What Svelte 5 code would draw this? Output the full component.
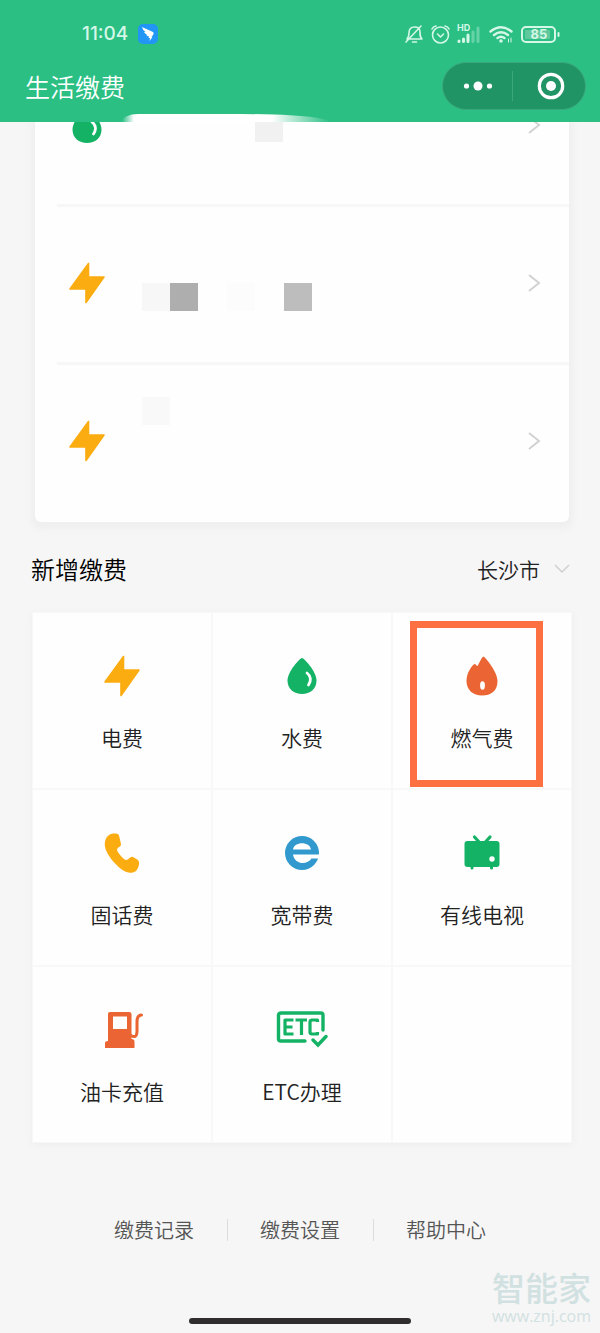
<script>
  let city = $state('长沙市');

  // pixelated blocks that cover each account's private details
  const accounts = [
    { icon: 'water', blocks: [{ x: 113, y: 34, fill: '#f1f1f1' }] },
    {
      icon: 'power',
      blocks: [
        { x: 0, y: 45, fill: '#f7f7f7' },
        { x: 28, y: 45, fill: '#aeaeae' },
        { x: 85, y: 45, fill: '#fcfcfc' },
        { x: 142, y: 45, fill: '#bdbdbd' }
      ]
    },
    { icon: 'power', blocks: [{ x: 0, y: 1, fill: '#f9f9f9' }] }
  ];

  const services = [
    { icon: 'power', label: '电费' },
    { icon: 'water', label: '水费' },
    { icon: 'gas', label: '燃气费', marked: true },
    { icon: 'phone', label: '固话费' },
    { icon: 'broadband', label: '宽带费' },
    { icon: 'tv', label: '有线电视' },
    { icon: 'fuel', label: '油卡充值' },
    { icon: 'etc', label: 'ETC办理' }
  ];

  const links = ['缴费记录', '缴费设置', '帮助中心'];
</script>

{#snippet serviceIcon(name)}
  <svg class="service-icon" viewBox="0 0 52 44" aria-hidden="true">
    {#if name === 'power'}
      <path d="M27.500 2.500V16H43L25 41.500V28H9Z" fill="#fbac10" stroke="#fbac10" stroke-width="1.600" stroke-linejoin="round" />
    {:else if name === 'water'}
      <path d="M26 4C28 4 40.500 17.500 40.500 26.500C40.500 35 34 40 26 40C18 40 11.500 35 11.500 26.500C11.500 17.500 24 4 26 4Z" fill="#14b264" />
      <path d="M31 19C35 22 35.500 27 32.500 31" fill="none" stroke="#fff" stroke-width="2.800" stroke-linecap="round" />
    {:else if name === 'gas'}
      <path d="M27.500 2.500C30 4 41.500 18 41.500 27C41.500 37 35 41.500 26 41.500C17 41.500 10.500 36 10.500 27C10.500 19 16 11 18.500 10C20 10 20.500 12 21.500 12C23 10 25.500 3 27.500 2.500Z" fill="#ea6533" />
      <ellipse cx="26.500" cy="31.500" rx="2.400" ry="4.200" fill="#fff" />
    {:else if name === 'phone'}
      <path d="M13 4C17 2 22 2 23 4.500L25 13C25.500 16 21 16 21 19C22 22 27 28 30 29C33 29 34 25 37 26L42 29C44 31 43 37 40 40C36 43 30 42 25 38C18 32 12 25 9.500 18C8 12 9 7 13 4Z" fill="#fbac10" />
    {:else if name === 'broadband'}
      <circle cx="26" cy="22" r="17" fill="#3199cd" />
      <path d="M17 18.500C18 10 34 10 35 18.500ZM17 23.500H43V27.500H35.500C31 34.500 18.500 33.500 17 23.500Z" fill="#fff" />
    {:else if name === 'tv'}
      <path d="M18.500 6L24 12M34 6L28.500 12" fill="none" stroke="#14b264" stroke-width="3.200" stroke-linecap="round" />
      <rect x="8.500" y="10" width="35" height="26" rx="3" fill="#14b264" />
      <path d="M16 35V37M35.500 35V37" stroke="#14b264" stroke-width="3" stroke-linecap="round" />
      <circle cx="36" cy="28" r="2.700" fill="#fff" />
    {:else if name === 'fuel'}
      <path d="M14 4H33Q35.500 4 35.500 6V31Q38.500 31 38.500 34V40H9V35Q9 33 12 33V6Q12 4 14 4ZM17 8.500V21H31V8.500Z" fill="#ea6533" fill-rule="evenodd" />
      <path d="M35 27.500C39 30 41 28 41 23V14Q41 7 45.500 7" fill="none" stroke="#ea6533" stroke-width="3" stroke-linecap="round" />
    {:else if name === 'etc'}
      <path d="M47 22V7Q47 5 45 5H5Q3 5 2.500 7V31Q2.500 33 5 33H29" fill="none" stroke="#14b264" stroke-width="3.400" stroke-linecap="round" />
      <path d="M17.500 12H9V26H17.500M9 19H16.500M19.500 12H31M25.500 12V27M41.500 14V12H36Q34 12 34 14V24Q34 26 36 26H41.500V24" fill="none" stroke="#14b264" stroke-width="3.200" stroke-linejoin="round" />
      <path d="M37 32L42 37L50 28.500" fill="none" stroke="#14b264" stroke-width="3.400" stroke-linecap="round" />
    {/if}
  </svg>
{/snippet}

<div class="page">
  <header>
    <div class="status-bar">
      <div class="status-left">
        <time>11:04</time>
        <svg width="20" height="20" viewBox="0 0 20 20" aria-hidden="true">
          <rect width="20" height="20" rx="5" fill="#2196f5" />
          <path d="M4 3L15 8Q16.500 9 15 11L13.500 13H14.500L11.500 17L12 14H10.500L11 12.500Q8.500 12 8 10.500L9.500 10.500Q6.500 9.500 6 8L7.500 8Q4.500 6 4 3Z" fill="#fff" />
        </svg>
      </div>
      <div class="status-right">
        <svg width="156" height="22" viewBox="0 0 156 22" fill="none" stroke="#d5f7e7" stroke-width="1.600" stroke-linecap="round" stroke-linejoin="round" aria-hidden="true">
          <path d="M3 16H18C16 14 16 13 16 9Q16 4 10.500 4Q5 4 5 10Q5 14 3 16ZM8.500 19H12.500M2 19L17 3" />
          <circle cx="36.500" cy="12" r="8" />
          <path d="M33.500 11L36.500 14L39.500 11M28 6Q29 3.500 32 3M45 6Q44 3.500 41 3" />
          <path d="M55 18V18.500M59.500 16V18.500M64 12V18.500" stroke-width="3" />
          <path d="M69 9V18.500M74 5V18.500" stroke-width="3" opacity=".35" />
          <path d="M86.500 8.500Q97 0 107.500 8.500M90 12Q97 6.500 104 12M93.500 15Q97 12.500 100.500 15" stroke-width="2.400" />
          <circle cx="97" cy="18" r="1" fill="#d5f7e7" />
          <path d="M104.500 16V19M107 15V19" stroke-width="1" />
          <rect x="118" y="4" width="33" height="15" rx="4" stroke-width="2" />
          <rect x="121" y="7" width="25" height="9" rx="1" fill="#5fc99d" stroke="none" />
          <path d="M154.500 10V13" stroke-width="2" />
          <text x="53" y="8" class="hd">HD</text>
          <text x="135" y="16" class="level">85</text>
        </svg>
      </div>
    </div>
    <div class="nav-bar">
      <h1>生活缴费</h1>
      <div class="capsule">
        <button aria-label="更多">
          <svg width="30" height="12" viewBox="0 0 30 12" fill="#fff" aria-hidden="true">
            <circle cx="3.500" cy="6" r="2.600" />
            <circle cx="15" cy="6" r="4.500" />
            <circle cx="26.500" cy="6" r="2.600" />
          </svg>
        </button>
        <button aria-label="关闭">
          <svg width="28" height="28" viewBox="0 0 28 28" fill="#fff" aria-hidden="true">
            <circle cx="14" cy="14" r="11.700" fill="none" stroke="#fff" stroke-width="3.200" />
            <circle cx="14" cy="14" r="5" />
          </svg>
        </button>
      </div>
    </div>
    <div class="smudge"></div>
  </header>

  <main>
    <div class="accounts">
      {#each accounts as account}
        <a class="account" href="#bill" aria-label="账单">
          {@render serviceIcon(account.icon)}
          <svg class="masked" width="180" height="90" viewBox="0 0 180 90" aria-hidden="true">
            {#each account.blocks as block}
              <rect x={block.x} y={block.y} width="28" height="28" fill={block.fill} />
            {/each}
          </svg>
          <svg class="arrow" width="14" height="20" viewBox="0 0 14 20" aria-hidden="true">
            <path d="M2 2L12 10L2 18" fill="none" stroke="#d2d2d2" stroke-width="2" />
          </svg>
        </a>
      {/each}
    </div>

    <div class="section-head">
      <h2>新增缴费</h2>
      <div class="city">
        <select aria-label="城市" bind:value={city}>
          <option>长沙市</option>
        </select>
        <svg width="16" height="10" viewBox="0 0 16 10" aria-hidden="true">
          <path d="M1 1L8 8L15 1" fill="none" stroke="#d0d0d0" stroke-width="1.500" />
        </svg>
      </div>
    </div>

    <div class="services">
      {#each services as service}
        <a class="service" class:marked={service.marked} href="#pay">
          {@render serviceIcon(service.icon)}
          <span>{service.label}</span>
        </a>
      {/each}
      <div class="service"></div>
    </div>
  </main>

  <footer>
    <nav>
      {#each links as link}
        <a href="#more">{link}</a>
      {/each}
    </nav>
    <div class="home-bar"></div>
    <div class="watermark">
      <strong>智能家</strong>
      <span>www.znj.com</span>
    </div>
  </footer>
</div>

<style>
  :global(body) {
    margin: 0;
    background: #f6f6f6;
  }

  .page {
    position: relative;
    min-height: 100vh;
    font-family: 'Noto Sans CJK SC', sans-serif;
    font-weight: 350;
    color: #222;
    background: #f6f6f6;
  }

  a {
    color: inherit;
    text-decoration: none;
  }

  h1,
  h2 {
    margin: 0;
    font-weight: inherit;
  }

  /* Header */
  header {
    position: relative;
    z-index: 1;
    height: 122px;
    box-sizing: border-box;
    padding-top: 20px;
    background: #2bbf84;
    color: #fff;
  }

  .status-bar {
    display: flex;
    justify-content: space-between;
    align-items: center;
    height: 28px;
    padding: 0 40px 0 82px;
  }

  .status-left {
    display: flex;
    align-items: center;
    gap: 10px;
  }

  time {
    font-family: Inter, sans-serif;
    font-size: 19px;
    font-weight: 500;
    line-height: 28px;
    color: #d5f7e7;
  }

  .status-right {
    display: flex;
  }

  .hd,
  .level {
    font-family: Inter, sans-serif;
    font-size: 9px;
    font-weight: 700;
    fill: #d5f7e7;
    stroke: none;
  }

  .level {
    font-size: 13px;
    text-anchor: middle;
  }

  .nav-bar {
    display: flex;
    justify-content: space-between;
    align-items: center;
    height: 48px;
    padding: 14px 14px 0 25px;
  }

  h1 {
    font-size: 25px;
    line-height: 36px;
  }

  .capsule {
    display: flex;
    align-items: center;
    width: 142px;
    height: 46px;
    border: 1px solid #3aa87c;
    border-radius: 24px;
    background: #219466;
  }

  .capsule button {
    display: flex;
    flex: 1;
    align-items: center;
    justify-content: center;
    height: 30px;
    padding: 0;
    border: none;
    background: none;
  }

  .capsule button + button {
    padding-left: 3px;
    border-left: 1px solid #3aa87c;
  }

  .smudge {
    position: absolute;
    bottom: 0;
    left: 122px;
    width: 208px;
    height: 8px;
    border-radius: 16px 90px 0 0 / 8px 8px 0 0;
    background: linear-gradient(90deg, transparent, #fff 12px, #fff 150px, transparent);
  }

  /* Existing accounts */
  .accounts {
    overflow: hidden;
    margin: 0 31px 0 35px;
    padding-bottom: 2px;
    border-radius: 0 0 6px 6px;
    background: #fefefe;
    box-shadow: 0 3px 6px 4px #efefef;
  }

  .account {
    display: flex;
    align-items: center;
    box-sizing: border-box;
    height: 158px;
    padding: 0 28px 0 26px;
  }

  .account:first-child {
    margin-top: -76px;
  }

  .account + .account {
    background: linear-gradient(#f7f7f7, #f7f7f7) 22px 0 / 100% 3px no-repeat;
  }

  .masked {
    margin-left: 29px;
  }

  .arrow {
    margin-left: auto;
  }

  .service-icon {
    width: 52px;
    height: 44px;
  }

  /* New payments */
  .section-head {
    display: flex;
    justify-content: space-between;
    align-items: center;
    height: 86px;
    padding: 4px 30px 0 31px;
  }

  h2 {
    font-size: 24px;
    line-height: 36px;
    color: #000;
  }

  .city {
    display: flex;
    align-items: center;
    gap: 14px;
  }

  select {
    appearance: none;
    padding: 0;
    border: none;
    background: none;
    font: inherit;
    font-size: 21px;
    line-height: 32px;
    color: #222;
  }

  .services {
    display: grid;
    grid-template-columns: repeat(3, 1fr);
    margin: 0 28px 0 32px;
    border-radius: 4px;
    box-shadow: 0 2px 6px 1px #efefef;
  }

  .service {
    position: relative;
    display: flex;
    flex-direction: column;
    align-items: center;
    gap: 23px;
    box-sizing: border-box;
    height: 177px;
    padding-top: 42px;
    background: #fefefe;
    box-shadow: inset 0 0 0 1px #f8f8f8;
  }

  .service span {
    font-size: 21px;
    line-height: 32px;
  }

  .marked::after {
    content: '';
    position: absolute;
    inset: 9px 29px 2px 18px;
    border: 7px solid #fc7042;
  }

  /* Footer */
  nav {
    display: flex;
    justify-content: center;
    padding-top: 72px;
  }

  nav a {
    padding: 0 33px;
    font-size: 20px;
    line-height: 30px;
    color: #555;
  }

  nav a + a {
    background: linear-gradient(#ddd, #ddd) 0 4px / 1px 22px no-repeat;
  }

  .home-bar {
    width: 37%;
    height: 6px;
    margin: 73px auto 0;
    border-radius: 3px;
    background: #2f2d2e;
  }

  .watermark {
    position: absolute;
    right: 9px;
    bottom: 8px;
    display: flex;
    flex-direction: column;
    align-items: center;
    color: #d1e1e1;
  }

  .watermark strong {
    font-size: 33px;
    font-weight: 500;
    line-height: 40px;
  }

  .watermark span {
    font-family: 'Open Sans', sans-serif;
    font-size: 16px;
    font-weight: 400;
    line-height: 18px;
  }
</style>
